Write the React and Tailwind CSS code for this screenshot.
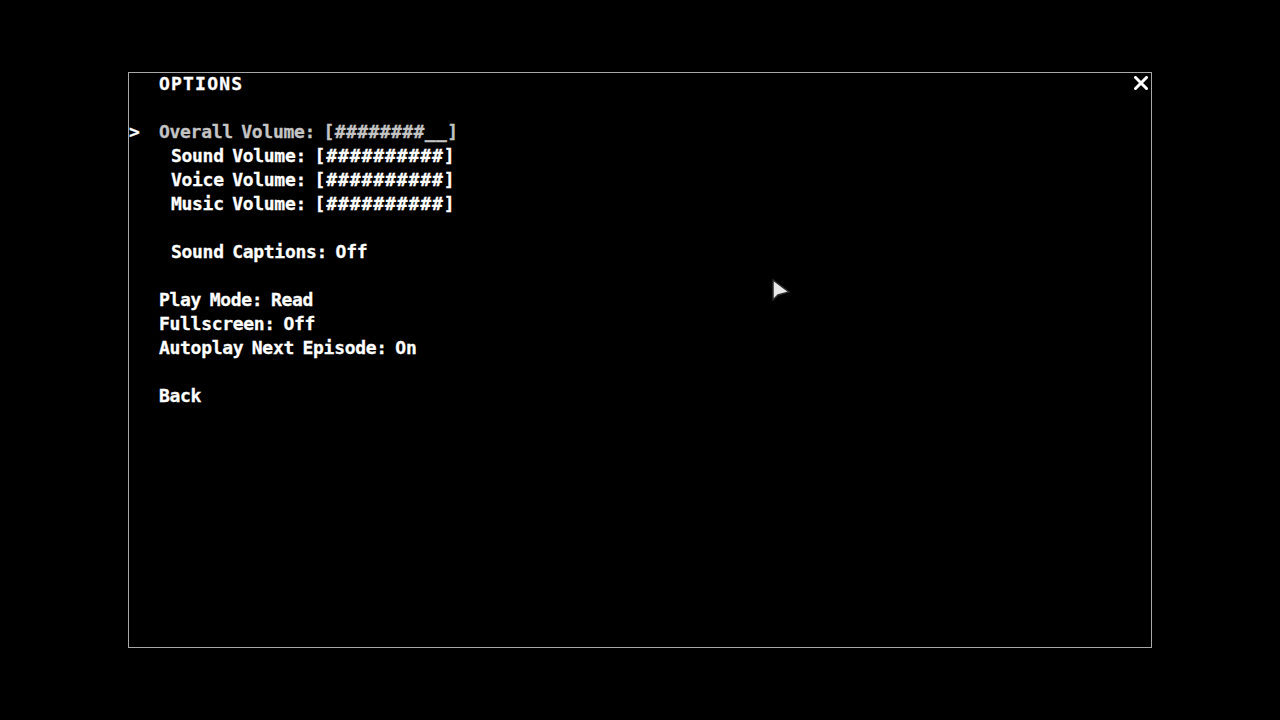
const FONT = { fontFamily: '"DejaVu Sans Mono", "Liberation Mono", monospace' };

const VOLUMES = [
  { label: 'Sound Volume', bar: '##########' },
  { label: 'Voice Volume', bar: '##########' },
  { label: 'Music Volume', bar: '##########' },
];

function Bar({ children }) {
  return <span className="tracking-[0.9px]">{children}</span>;
}

export default function App() {
  return (
    <div className="w-[1280px] h-[720px] bg-black flex items-center justify-center relative" style={FONT}>
      <div className="w-[1024px] h-[576px] border border-[#a8a8a8] relative">
        {/* close */}
        <svg className="absolute right-[3px] top-[3px]" width="14" height="14" viewBox="0 0 14 14">
          <path d="M1.5 1.5 L12.5 12.5 M12.5 1.5 L1.5 12.5" stroke="#fff" strokeWidth="3" strokeLinecap="square" />
        </svg>

        <div className="pl-[30px] -mt-[1px] text-[18px] font-bold leading-[24px] text-white tracking-[-0.3px] [word-spacing:-2px] [-webkit-text-stroke:0.3px_currentColor]">
          <div className="tracking-[1.2px]">OPTIONS</div>
          <div className="h-[24px]" />
          <div className="relative text-[#c4c4c4]">
            <span className="absolute -left-[30px] text-white">&gt;</span>
            Overall Volume: <span className="tracking-[0.4px]">[########__]</span>
          </div>
          {VOLUMES.map((v) => (
            <div key={v.label} className="pl-[12px]">
              {v.label}: <Bar>[{v.bar}]</Bar>
            </div>
          ))}
          <div className="h-[24px]" />
          <div className="pl-[12px]">Sound Captions: Off</div>
          <div className="h-[24px]" />
          <div>Play Mode: Read</div>
          <div>Fullscreen: Off</div>
          <div>Autoplay Next Episode: On</div>
          <div className="h-[24px]" />
          <div>Back</div>
        </div>
      </div>

      {/* mouse pointer */}
      <svg className="absolute left-[771px] top-[278px]" width="22" height="26" viewBox="0 0 22 26">
        <path d="M2 2 L2 22 L7 17 L18 14 Z" fill="#e8e8e8" stroke="#2a2a2a" strokeWidth="1.5" />
      </svg>
    </div>
  );
}
